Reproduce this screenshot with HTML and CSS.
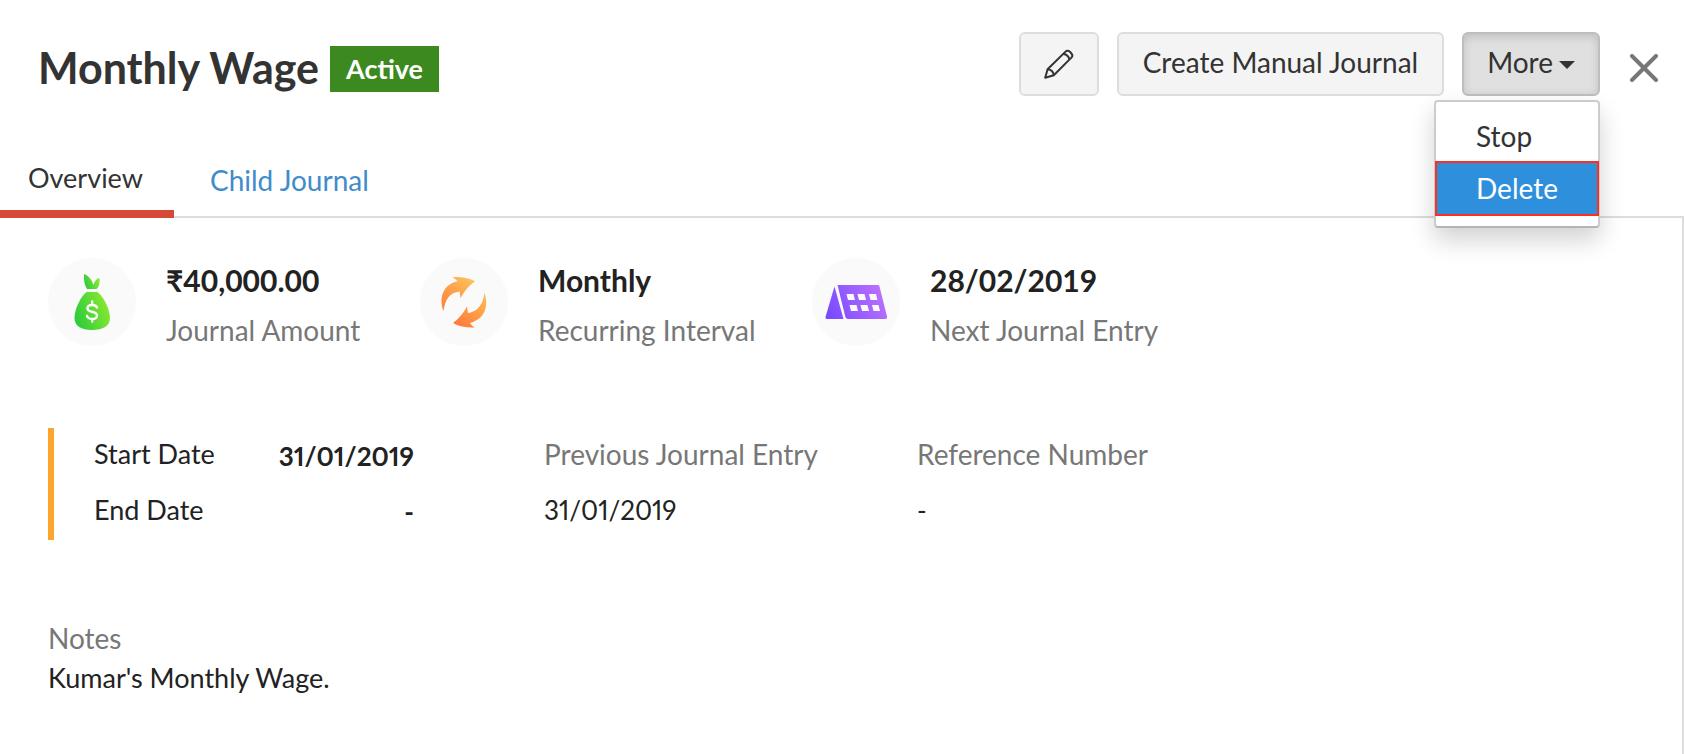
FILE: index.html
```html
<!DOCTYPE html>
<html lang="en">
<head>
<meta charset="utf-8">
<title>Monthly Wage</title>
<link rel="stylesheet" href="styles.css">
</head>
<body>
<header class="header">
  <h1 class="title">Monthly Wage</h1>
  <span class="badge">Active</span>
  <div class="actions">
    <button class="btn btn-icon" type="button" aria-label="Edit">
      <svg class="pencil" width="30" height="30" viewBox="0 0 30 30" aria-hidden="true">
        <path d="M1.2 28.8 3.6 20.3 21.5 2.6C22.8 1.2 24.6 1.4 26.4 3.2S28.9 7 27.6 8.4L9.8 26.2Z"/>
        <path d="M3.6 20.3C7 20.6 9.4 23 9.8 26.2M19.4 4.9C22.4 5.2 24.8 7.5 25.3 10.5"/>
      </svg>
    </button>
    <button class="btn" type="button">Create Manual Journal</button>
    <div class="dropdown">
      <button class="btn btn-open" type="button" aria-haspopup="true" aria-expanded="true">More<span class="caret"></span></button>
      <div class="menu" role="menu">
        <button class="menu-item" type="button" role="menuitem">Stop</button>
        <button class="menu-item menu-item-active" type="button" role="menuitem">Delete</button>
      </div>
    </div>
    <button class="close" type="button" aria-label="Close">
      <svg width="28" height="28" viewBox="0 0 28 28" aria-hidden="true"><path d="M2 2 26 26M26 2 2 26"/></svg>
    </button>
  </div>
</header>
<nav class="tabs">
  <a class="tab tab-active" href="#overview">Overview</a>
  <a class="tab" href="#child">Child Journal</a>
</nav>
<main class="content" id="overview">
  <section class="summary">
    <div class="stat">
      <span class="disc">
        <svg width="88" height="88" viewBox="0 0 88 88" aria-hidden="true">
          <defs><linearGradient id="green" x1="0" y1=".7" x2="1" y2=".3"><stop offset="0" stop-color="#2bcb3d"/><stop offset="1" stop-color="#8eea2e"/></linearGradient></defs>
          <path fill="url(#green)" d="M36 16C41 18 44 22 45.500 27C46.500 23 48.500 20.500 51.500 20C52 25 51 29 48.500 31H39C36.500 27 35.500 22 36 16Z"/>
          <path fill="url(#green)" d="M38.500 34H49.500C55 38 62 51 62 60C62 68 55 72 44 72S26.500 68 26.500 60C26.500 51 33 38 38.500 34Z"/>
          <path fill="none" stroke="#fafafa" stroke-width="2.400" stroke-linecap="round" d="M49 49.500C48 46.500 39.500 45.500 39.500 50.500C39.500 55 49 52.500 49 57.500C49 62.500 40 61.500 39 58M44.200 43.500V46.500M44.200 61V63.500"/>
        </svg>
      </span>
      <div><div class="stat-value">₹40,000.00</div><div class="stat-label">Journal Amount</div></div>
    </div>
    <div class="stat">
      <span class="disc">
        <svg width="88" height="88" viewBox="0 0 88 88" aria-hidden="true">
          <defs><linearGradient id="orange" gradientUnits="userSpaceOnUse" x1="28" y1="64" x2="60" y2="24"><stop offset="0" stop-color="#ff7636"/><stop offset="1" stop-color="#fdc55d"/></linearGradient></defs>
          <path fill="url(#orange)" d="M32.500 19C40 18.500 48 19.500 55 23.300C49 27.500 44.500 33 40.500 40L39.500 33.500C30 34.500 25 41.500 23.500 53C19 41 22 27 37.500 23.300C36 21.500 34.500 20.200 32.500 19Z"/>
          <path fill="url(#orange)" d="M55 69.500C47.500 70 40 69 33 65C39 60.500 43.500 55 47 48.500L48 55C58 53.500 63 46 64.500 35C69 48 65 61 50 65C51.500 67 53 68.500 55 69.500Z"/>
        </svg>
      </span>
      <div><div class="stat-value">Monthly</div><div class="stat-label">Recurring Interval</div></div>
    </div>
    <div class="stat">
      <span class="disc">
        <svg width="88" height="88" viewBox="0 0 88 88" aria-hidden="true">
          <defs><linearGradient id="purple" gradientUnits="userSpaceOnUse" x1="16" y1="58" x2="72" y2="30"><stop offset="0" stop-color="#784aff"/><stop offset="1" stop-color="#bd73ff"/></linearGradient></defs>
          <path fill="url(#purple)" d="M22.500 28.500 31.500 61H15Q13 61 13.500 59Z"/>
          <path fill="url(#purple)" d="M25.500 27H66Q67 27 67.400 28L75 58.500Q75.500 61 73 61H36Q34 61 33.400 59Z"/>
          <path fill="#fafafa" d="M34.500 36h7l1.500 6h-7zM45.500 36h7l1.500 6h-7zM57 36h7l1.500 6h-7zM37.500 47h7l1.500 6h-7zM48.500 47h7l1.500 6h-7zM60 47h6.500l1.500 6h-6.500z"/>
        </svg>
      </span>
      <div><div class="stat-value">28/02/2019</div><div class="stat-label">Next Journal Entry</div></div>
    </div>
  </section>
  <section class="details">
    <dl class="dates">
      <dt>Start Date</dt><dd>31/01/2019</dd>
      <dt>End Date</dt><dd>-</dd>
    </dl>
    <dl class="field"><dt>Previous Journal Entry</dt><dd>31/01/2019</dd></dl>
    <dl class="field"><dt>Reference Number</dt><dd>-</dd></dl>
  </section>
  <section class="notes">
    <h2 class="notes-title">Notes</h2>
    <p class="notes-text">Kumar's Monthly Wage.</p>
  </section>
</main>
</body>
</html>
```
FILE: styles.css
```css
* { box-sizing: border-box; }
body {
  margin: 0;
  min-height: 100vh;
  display: flex;
  flex-direction: column;
  background: #fff;
  color: #222;
  font: 28px/40px Lato, "Open Sans", sans-serif;
}
button { font: inherit; color: inherit; cursor: pointer; }
dl, dd, p, h1, h2 { margin: 0; }
svg { display: block; }

.header { display: flex; align-items: flex-start; padding: 32px 26px 0 38px; }
.title { padding-top: 12px; font-size: 43px; line-height: 48px; font-weight: 700; color: #333; white-space: nowrap; }
.badge { margin: 14px 0 0 11px; padding: 0 16px; font-size: 27px; line-height: 46px; font-weight: 700; color: #fff; background: #3c8a1f; }
.actions { display: flex; gap: 18px; margin-left: auto; color: #333; }
.btn { height: 64px; padding: 0 24px 4px; background: #f4f4f4; border: 2px solid #ddd; border-radius: 6px; white-space: nowrap; }
.btn-icon { width: 80px; padding: 0 23px; }
.pencil { fill: none; stroke: #333; stroke-width: 2; stroke-linejoin: round; }
.btn-open { display: flex; align-items: center; gap: 6px; padding: 0 23px 4px; background: #e0e0e0; border-color: #bebebe; box-shadow: inset 0 3px 10px rgba(0, 0, 0, .15); }
.caret { margin-top: 6px; border: 8px solid transparent; border-top-color: #333; border-bottom: 0; }
.dropdown { position: relative; }
.menu { position: absolute; top: 68px; right: 0; z-index: 2; width: 166px; padding: 10px 0 11px; background: #fff; border: 2px solid #ccc; border-bottom-color: #b4b4b4; border-radius: 4px; box-shadow: 0 12px 24px rgba(0, 0, 0, .18); }
.menu-item { display: block; width: 100%; height: 50px; padding: 0 0 2px 40px; border: 0; background: none; text-align: left; }
.menu-item-active { height: 53px; color: #fff; background: #2e90dc; outline: 2px solid #fb3020; outline-offset: -1px; }
.close { align-self: flex-start; margin: 22px 0 0 12px; padding: 0; border: 0; background: none; }
.close path { fill: none; stroke: #777; stroke-width: 4; stroke-linecap: round; }

.tabs { display: flex; margin-top: 56px; border-bottom: 2px solid #ddd; }
.tab { height: 64px; padding: 8px 28px 0 36px; color: #428bca; text-decoration: none; }
.tab-active { height: 66px; margin-bottom: -2px; padding: 6px 31px 0 28px; font-size: 27px; color: #333; border-bottom: 8px solid #d54935; }

.content { flex: 1; padding: 40px 48px; border-right: 2px solid #ddd; }
.summary { display: flex; }
.stat { display: flex; gap: 30px; min-width: 372px; white-space: nowrap; }
.stat + .stat { min-width: 392px; }
.disc { width: 88px; height: 88px; border-radius: 50%; background: #fafafa; }
.stat-value { margin-top: 2px; font-size: 30px; font-weight: 700; }
.stat-label { margin-top: 10px; color: #777; }
.details { display: flex; margin-top: 78px; white-space: nowrap; font-variant-numeric: proportional-nums; }
.dates { display: grid; grid-template-columns: 1fr auto; align-content: start; width: 366px; height: 112px; padding: 6px 0 0 40px; border-left: 6px solid #fba52a; row-gap: 14px; font-size: 27px; }
.dates dd { padding-top: 2px; font-size: 26px; font-weight: 700; text-align: right; }
.field { display: grid; row-gap: 16px; align-content: start; width: 373px; padding-top: 6px; }
.field dd { font-size: 26px; }
.dates + .field { margin-left: 130px; }
.field dt, .notes-title { color: #777; }
.notes { margin-top: 78px; }
.notes-title { font-size: 28px; font-weight: 400; }
.notes-text { font-size: 27px; }
```
